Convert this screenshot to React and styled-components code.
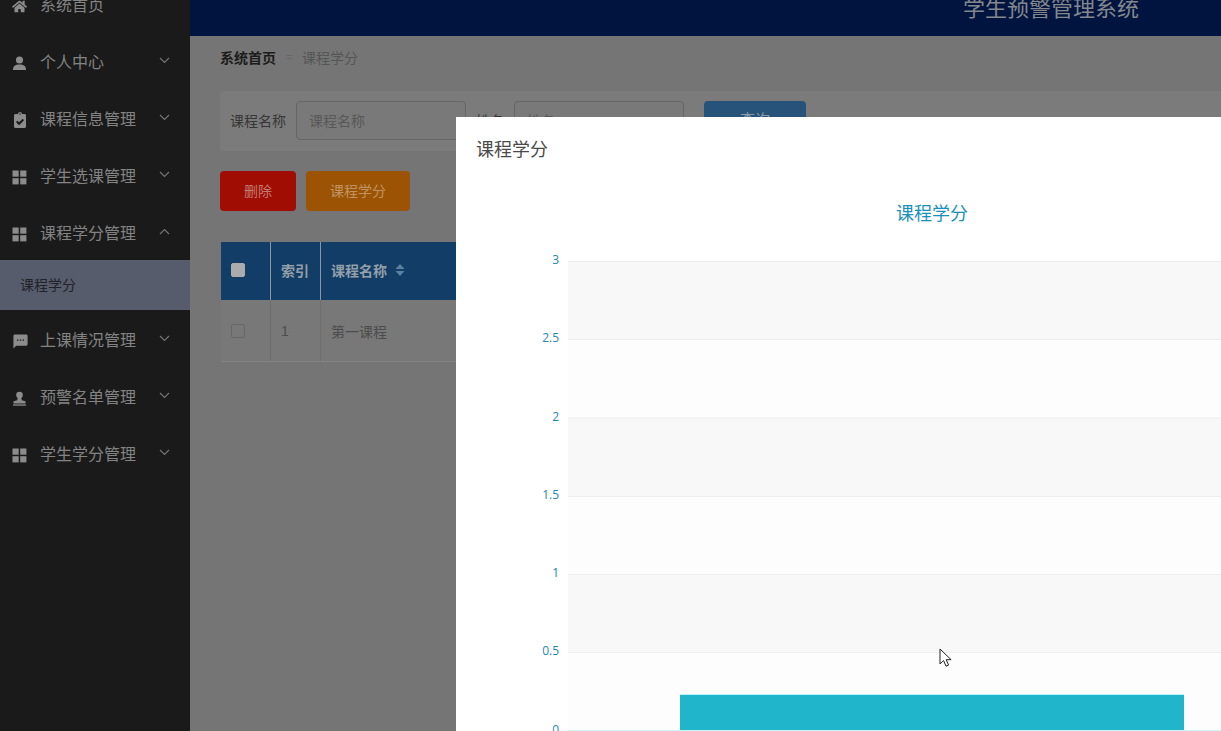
import React from 'react';
import styled, { createGlobalStyle } from 'styled-components';
import { FaHome, FaClipboardCheck } from 'react-icons/fa';
import { MdSms } from 'react-icons/md';

const Global = createGlobalStyle`
  html, body { margin: 0; padding: 0; height: 100%; overflow: hidden; background: #757575; }
  * { box-sizing: border-box; }
  body { font-family: "Liberation Sans", "Noto Sans CJK SC", sans-serif; }
`;

const Viewport = styled.div`
  position: relative;
  width: 1221px;
  height: 731px;
  overflow: hidden;
`;
const Scrolled = styled.div`
  display: flex;
  width: 1221px;
  height: 756px;
  margin-top: -25px;
`;
const Sidebar = styled.nav`
  flex: 0 0 190px;
  background: #1a1a1a;
  display: flex;
  flex-direction: column;
`;
const MenuItem = styled.div`
  height: 57px;
  display: flex;
  align-items: center;
  padding: 5px 0 0 12px;
  color: #838383;
  font-size: 16px;
  line-height: 1;
`;
const MenuIcon = styled.span`
  width: 28px;
  flex: none;
  display: flex;
  align-items: center;
  color: #8c8c8c;
  font-size: 15px;
`;
const MenuLabel = styled.span`
  flex: 1;
`;
const Caret = styled.svg`
  flex: none;
  margin: -6px 20px 0 0;
  color: #737373;
`;
const SubItem = styled.div`
  height: 50px;
  display: flex;
  align-items: center;
  padding: 0 0 3px 20px;
  background: #575c6c;
  color: #212329;
  font-size: 14px;
`;
const Main = styled.main`
  flex: 1;
  min-width: 0;
  display: flex;
  flex-direction: column;
  background: #757575;
`;
const Header = styled.header`
  height: 61px;
  flex: none;
  background: #001440;
  display: flex;
  align-items: center;
  justify-content: flex-end;
  padding: 0 82px 0 0;
  color: #84888d;
  font-size: 22px;
  font-family: "Noto Sans CJK SC", sans-serif;
`;
const Content = styled.div`
  padding: 0 0 0 30px;
  flex: 1;
  display: flex;
  flex-direction: column;
`;
const Breadcrumb = styled.div`
  height: 55px;
  display: flex;
  align-items: center;
  gap: 8px;
  padding-bottom: 14px;
  font-size: 14px;
`;
const Crumb = styled.span`
  color: ${p => (p.$strong ? '#1c1c1c' : '#555555')};
  font-weight: ${p => (p.$strong ? 700 : 400)};
`;
const CrumbSep = styled.span`
  width: 10px;
  text-align: center;
  color: #686868;
  font-size: 12px;
`;
const SearchBar = styled.div`
  height: 60px;
  display: flex;
  align-items: center;
  background: #7b7b7b;
  padding: 0 0 2px 10px;
  border-radius: 4px 0 0 4px;
`;
const SearchLabel = styled.span`
  color: #363636;
  font-size: 14px;
  width: ${p => p.$w}px;
  flex: none;
`;
const SearchInput = styled.div`
  width: ${p => p.$w}px;
  height: 39px;
  margin-right: ${p => p.$mr}px;
  flex: none;
  border: 1px solid #666666;
  border-radius: 4px;
  background: #797979;
  color: #585858;
  font-size: 14px;
  display: flex;
  align-items: center;
  padding-left: 12px;
`;
const SearchButton = styled.div`
  width: 102px;
  height: 39px;
  flex: none;
  border-radius: 4px;
  background: #27527a;
  color: #8b9aa8;
  font-size: 15px;
  display: flex;
  align-items: center;
  justify-content: center;
  padding-bottom: 4px;
`;
const Actions = styled.div`
  display: flex;
  gap: 10px;
  margin-top: 20px;
`;
const ActionButton = styled.div`
  height: 40px;
  width: ${p => p.$w}px;
  border-radius: 4px;
  background: ${p => p.$bg};
  color: ${p => p.$fg};
  font-size: 14px;
  display: flex;
  align-items: center;
  justify-content: center;
  padding-bottom: 2px;
`;
const Table = styled.div`
  margin: 31px 0 0 1px;
  display: flex;
  flex-direction: column;
  border-bottom: 1px solid #838383;
`;
const Row = styled.div`
  display: grid;
  grid-template-columns: 49px 50px 1fr;
  height: ${p => p.$h}px;
  background: ${p => p.$bg};
  color: ${p => p.$fg};
  font-size: 14px;
  font-weight: ${p => (p.$head ? 700 : 400)};
`;
const Cell = styled.div`
  display: flex;
  align-items: center;
  padding: 0 0 ${p => (p.$head ? 2 : 0)}px 10px;
  border-left: ${p => (p.$first ? 'none' : `1px solid ${p.$line}`)};
  gap: 8px;
`;
const Check = styled.span`
  width: 14px;
  height: 14px;
  border-radius: 2px;
  background: ${p => (p.$filled ? '#a9abad' : 'transparent')};
  border: 1px solid ${p => (p.$filled ? '#a9abad' : '#676767')};
`;
const SortIcon = styled.svg`
  width: 10px;
  height: 14px;
  color: #5b82a2;
`;
const Dialog = styled.section`
  position: absolute;
  left: 456px;
  top: 117px;
  width: 952px;
  height: 700px;
  background: #fff;
`;
const DialogTitle = styled.h2`
  margin: 0;
  height: 65px;
  padding: 21px 20px 0;
  color: #4a4a4a;
  font-size: 18px;
  font-weight: 400;
  line-height: 25px;
`;
const ChartSvg = styled.svg`
  display: block;
`;
const Cursor = styled.svg`
  position: absolute;
  left: 939px;
  top: 648px;
`;

const axis = [
  ['3', 79], ['2.5', 157], ['2', 235.5], ['1.5', 314], ['1', 392], ['0.5', 470], ['0', 548.5],
];

const Grid = () => (
  <svg width="15" height="15" viewBox="0 0 15 15" fill="currentColor">
    <rect x="0.5" y="0.5" width="6.2" height="6.2" />
    <rect x="8.2" y="0.5" width="6.2" height="6.2" />
    <rect x="0.5" y="8.2" width="6.2" height="6.2" />
    <rect x="8.2" y="8.2" width="6.2" height="6.2" />
  </svg>
);
const Person = () => (
  <svg width="15" height="15" viewBox="0 0 15 15" fill="currentColor">
    <circle cx="7.5" cy="4" r="3.6" />
    <path d="M1 14c0-4 2.2-5.4 6.5-5.4S14 10 14 14z" />
  </svg>
);
const Stamp = () => (
  <svg width="15" height="15" viewBox="0 0 15 15" fill="currentColor">
    <circle cx="7.5" cy="4" r="3.3" />
    <path d="M5.8 6.5h3.4l.6 2.7 3.7 1V12.6H1.5V10.2l3.7-1z" />
    <rect x="1" y="13.4" width="13" height="1.3" />
  </svg>
);

const menu = [
  [<FaHome />, '系统首页', null],
  [<Person />, '个人中心', 'down'],
  [<FaClipboardCheck size={16} />, '课程信息管理', 'down'],
  [<Grid />, '学生选课管理', 'down'],
  [<Grid />, '课程学分管理', 'up'],
  'sub',
  [<MdSms size={17} />, '上课情况管理', 'down'],
  [<Stamp />, '预警名单管理', 'down'],
  [<Grid />, '学生学分管理', 'down'],
];

export default function App() {
  return (
    <Viewport>
      <Global />
      <Scrolled>
        <Sidebar>
          {menu.map((m, i) =>
            m === 'sub' ? (
              <SubItem key={i}>课程学分</SubItem>
            ) : (
              <MenuItem key={i}>
                <MenuIcon>{m[0]}</MenuIcon>
                <MenuLabel>{m[1]}</MenuLabel>
                {m[2] && (
                  <Caret width="11" height="7" viewBox="0 0 11 7" fill="none" stroke="currentColor" strokeWidth="1.2">
                    <path d={m[2] === 'up' ? 'M1 6l4.5-4.5L10 6' : 'M1 1l4.5 4.5L10 1'} />
                  </Caret>
                )}
              </MenuItem>
            )
          )}
        </Sidebar>
        <Main>
          <Header>学生预警管理系统</Header>
          <Content>
            <Breadcrumb>
              <Crumb $strong>系统首页</Crumb>
              <CrumbSep>=</CrumbSep>
              <Crumb>课程学分</Crumb>
            </Breadcrumb>
            <SearchBar>
              <SearchLabel $w={66}>课程名称</SearchLabel>
              <SearchInput $w={170} $mr={10}>课程名称</SearchInput>
              <SearchLabel $w={38}>姓名</SearchLabel>
              <SearchInput $w={170} $mr={20}>姓名</SearchInput>
              <SearchButton>查询</SearchButton>
            </SearchBar>
            <Actions>
              <ActionButton $w={76} $bg="#a00d03" $fg="#c27c72">删除</ActionButton>
              <ActionButton $w={104} $bg="#9c5404" $fg="#c09462">课程学分</ActionButton>
            </Actions>
            <Table>
              <Row $h={58} $bg="#113d66" $fg="#949fa8" $head>
                <Cell $first $head><Check $filled /></Cell>
                <Cell $head $line="#8797a6">索引</Cell>
                <Cell $head $line="#8797a6">
                  课程名称
                  <SortIcon viewBox="0 0 10 14" fill="currentColor">
                    <path d="M5 1l4.5 5H.5zM5 13L.5 8h9z" />
                  </SortIcon>
                </Cell>
              </Row>
              <Row $h={61} $bg="#787878" $fg="#4c4c4c">
                <Cell $first><Check /></Cell>
                <Cell $line="#6d6d6d">1</Cell>
                <Cell $line="#6d6d6d">第一课程</Cell>
              </Row>
            </Table>
          </Content>
        </Main>
      </Scrolled>
      <Dialog>
        <DialogTitle>课程学分</DialogTitle>
        <ChartSvg width="952" height="560" viewBox="0 0 952 560">
          <text x="476" y="38" textAnchor="middle" fontSize="18" fill="#1a8fbb"
            fontFamily='"Noto Sans CJK SC", sans-serif'>课程学分</text>
          {axis.slice(0, 6).map(([l, y], i) => (
            <rect key={l} x="112" y={y} width="728" height="78.5" fill={i % 2 ? '#fdfdfd' : '#f8f8f8'} />
          ))}
          {axis.slice(0, 6).map(([l, y]) => (
            <rect key={l} x="112" y={y} width="728" height="1" fill="#eeeeee" />
          ))}
          <rect x="224" y="513" width="504" height="36" fill="#20b5cb" />
          <rect x="224" y="512" width="504" height="1" fill="#b8f2f8" />
          <rect x="112" y="548" width="728" height="2" fill="#c6f7fb" />
          {axis.map(([l, y]) => (
            <text key={l} x="103" y={y + 3} textAnchor="end" fontSize="12" fill="#2188b6"
              fontFamily='"Open Sans", sans-serif'>{l}</text>
          ))}
        </ChartSvg>
      </Dialog>
      <Cursor width="13" height="20" viewBox="0 0 13 20">
        <path d="M1 1v15l3.6-3.4 2.4 5.6 2.6-1.1-2.4-5.4h4.9z" fill="#fff" stroke="#222" strokeWidth="1" />
      </Cursor>
    </Viewport>
  );
}
